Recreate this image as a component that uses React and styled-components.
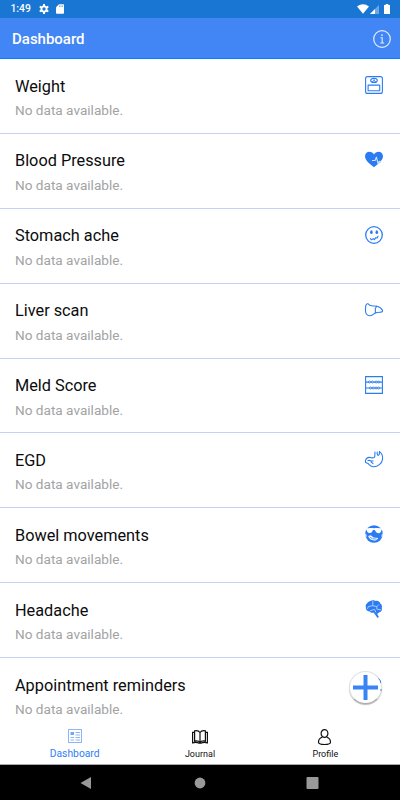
import React from "react";
import styled, { createGlobalStyle } from "styled-components";

const BLUE = "#2b7cf3";

const GlobalStyle = createGlobalStyle`
  * { box-sizing: border-box; }
  html, body { margin: 0; padding: 0; overflow: hidden; background: #fff; }
`;

const Screen = styled.div`
  position: relative;
  display: flex;
  flex-direction: column;
  width: 400px;
  height: 800px;
  overflow: hidden;
  background: #fff;
  font-family: Roboto, "Liberation Sans", sans-serif;
`;

const StatusBar = styled.div`
  flex: none;
  display: flex;
  align-items: center;
  height: 18px;
  padding: 0 10px 0 10.5px;
  background: #1976d2;
  color: #fff;
`;

const Clock = styled.span`
  width: 28px;
  font-size: 10.3px;
  font-weight: 500;
  line-height: 18px;
`;

const StatusIcon = styled.svg`
  flex: none;
  display: block;
  width: ${(p) => p.$w}px;
  height: ${(p) => p.$h}px;
  margin-left: ${(p) => p.$gap || 0}px;
`;

const Spacer = styled.div`
  flex: 1;
`;

const Header = styled.header`
  flex: none;
  display: flex;
  align-items: center;
  justify-content: space-between;
  height: 41px;
  padding: 1px 9px 0 12px;
  background: #4285f4;
  border-bottom: 1px solid #0a7cff;
`;

const HeaderTitle = styled.h1`
  margin: 0;
  color: #fff;
  font-size: 15px;
  font-weight: 500;
  line-height: 20px;
`;

const HeaderIcon = styled.svg`
  display: block;
  width: 18px;
  height: 18px;
`;

const List = styled.main`
  flex: none;
  height: 663px;
  overflow: hidden;
`;

const Row = styled.section`
  display: flex;
  justify-content: space-between;
  height: 74.9px;
  padding: 16.5px 17px 0 15px;
  border-bottom: 1px solid #c5d2f7;
`;

const RowTitle = styled.h2`
  margin: 0;
  color: #0c0c0c;
  font-size: 16.3px;
  font-weight: 400;
  line-height: 21px;
`;

const RowText = styled.p`
  margin: 3.5px 0 0;
  color: #a3a3a3;
  font-size: 13.6px;
  line-height: 20px;
`;

const RowIcon = styled.svg`
  flex: none;
  display: block;
  width: 18px;
  height: 18px;
  margin-top: 0.5px;
  overflow: visible;
  fill: none;
  stroke: ${BLUE};
  stroke-width: 1.1;
  stroke-linecap: round;
  stroke-linejoin: round;
`;

const AddButton = styled.button`
  position: absolute;
  left: 349px;
  top: 671px;
  display: flex;
  align-items: center;
  justify-content: center;
  width: 33px;
  height: 33px;
  padding: 0;
  border: 1px solid #e2e2e2;
  border-bottom-color: #aaa;
  border-radius: 50%;
  background: #fff;
  box-shadow: 0 1px 1px #bbb;
`;

const TabBar = styled.nav`
  flex: none;
  display: flex;
  height: 43px;
  padding: 0 12px;
  background: #fff;
  border-bottom: 1px solid #aaa;
`;

const Tab = styled.a`
  flex: 1;
  display: flex;
  flex-direction: column;
  align-items: center;
  padding-top: ${(p) => (p.$active ? 6 : 7)}px;
  color: ${(p) => (p.$active ? "#2f80f6" : "#111")};
`;

const TabIcon = styled.svg`
  display: block;
  width: 16px;
  height: 16px;
  overflow: visible;
  fill: none;
  stroke: currentColor;
`;

const TabLabel = styled.span`
  margin-top: ${(p) => (p.$active ? 3 : 2.5)}px;
  font-size: ${(p) => (p.$active ? 10.3 : 9)}px;
  line-height: 13px;
`;

const SystemBar = styled.div`
  flex: none;
  display: flex;
  align-items: center;
  justify-content: space-around;
  height: 35px;
  padding: 0 30px;
  background: #000;
`;

const SystemIcon = styled.svg`
  display: block;
  width: 14px;
  height: 14px;
  fill: #999;
`;

const icons = {
  scale: (
    <>
      <rect x=".6" y=".6" width="16.8" height="16.8" rx="2" />
      <ellipse cx="9" cy="4.4" rx="3.3" ry="2" />
      <path d="M9 5V3.5M7.4 5.5L9 4.5l1.6 1" strokeWidth=".8" />
      <rect x="3.1" y="9.1" width="11.6" height="5.7" />
    </>
  ),
  heart: (
    <>
      <path fill={BLUE} stroke="none" d="M9 16.2C5 13.2 0 9.4 0 5.2 0 2.6 2 .7 4.4.7 6.4.7 8 1.8 9 3.4 10 1.800 11.6.7 13.6.7 16 .7 18 2.6 18 5.2c0 4.2-5 8-9 11z" />
      <path stroke="#d3e4ff" d="M7.4 9.5h2.700l1.300-3.300 1.700 6.500 1.200-2.500 1.200 1 1-1.500" />
    </>
  ),
  face: (
    <>
      <circle cx="9" cy="9" r="8.300" strokeWidth="1.300" />
      <ellipse cx="6.400" cy="6.200" rx="1.300" ry="1.900" fill={BLUE} stroke="none" />
      <ellipse cx="11.800" cy="6.200" rx="1.300" ry="1.900" fill={BLUE} stroke="none" />
      <path d="M5.400 12.600l1.200 1.300 1.600-1.300 1.200 1 1.400-1.900 1.400.3.8-1.700" />
    </>
  ),
  liver: (
    <>
      <path d="M.9 4.200C1.600 2.400 3.200 2.300 4.300 4c2.400 1.400 5 .7 7.600 1.300 2.600.8 4.700 2.200 5.700 4.200.2 1.100-1 1.700-2.600 1.700-2.200 0-3.800.3-5.300 1.100-1.700 1.500-3.200 2.500-5.300 2.400C1.500 14.500.2 11.800.5 8.800.6 7 .5 5.400.9 4.200z" />
      <path d="M11.500 5.200l-1.200 2.500.1 4" />
    </>
  ),
  abacus: (
    <>
      <path strokeLinejoin="miter" d="M.6.6h16.800v16.800H.6zM1 6.100h16M1 12h16" />
      <path strokeWidth=".9" fill="#fff" d="M3.500 6a1 1 0 102 0 1 1 0 10-2 0M6.400 6a1 1 0 102 0 1 1 0 10-2 0M10.100 6a1 1 0 102 0 1 1 0 10-2 0M12.800 6a1 1 0 102 0 1 1 0 10-2 0M4.400 12a1 1 0 102 0 1 1 0 10-2 0M7.100 12a1 1 0 102 0 1 1 0 10-2 0M10 12a1 1 0 102 0 1 1 0 10-2 0M12.600 12a1 1 0 102 0 1 1 0 10-2 0" />
    </>
  ),
  stomach: (
    <>
      <path transform="translate(0 .6)" d="M14.500 1C17 3 18 6 17.500 9c-.7 4-4.500 7-9 7.200C5.500 16.300 4.500 14 3 12.800L.6 12C-.2 9.500 1.500 7 4 6.800c2.500-.2 3.500 1.200 5.200 0C10.500 5.800 9.500 3.500 10 1.500" />
      <path transform="translate(0 .6)" d="M12.200 1.500c-.3 2 .3 3.500 1.200 3.200 1.200-.5 1.200-2 1.100-3.700M3 10c2-1 3 1 5 .3M6 11.300l2 1.800" />
    </>
  ),
  bowel: (
    <>
      <circle cx="9" cy="9" r="8.800" fill={BLUE} stroke="none" />
      <path fill="#fff" stroke="none" d="M1.100 3.700C3 3.100 6.500 2.900 9 3.200c2.700-.3 6.100-.1 7.900.5L16 6.400c-.8 2.200-3.800 2.400-5.100.3L9.800 5.100H8.100L7 6.700C5.700 8.800 2.900 8.500 2 6.300z" />
      <path fill="#fff" stroke="none" d="M3.200 10.900l2.500-.6 2.800 2.200 4.700.5c-1.300 2.700-4.300 3.200-6.800 1.800-1.600-.9-2.700-2.300-3.200-3.900z" />
      <path stroke={BLUE} strokeWidth=".8" d="M5 12.100l2.500 1.700 3.700.2" />
      <path fill="#fff" stroke="none" d="M0 8.600l1.300.8.4 2.200-1 .3zM18 8.600l-1.200.8-.4 2.200.8.3z" />
    </>
  ),
  brain: (
    <>
      <path fill={BLUE} stroke="none" d="M2.400 3.100C3.200 1.300 5.300 1.200 6 .8c2-1 3.800-.4 4.700.1 2.500-.6 4.200 1.100 4.700 2.600 1.600 1.200 1.800 3 1.400 4.300.6 2.500-.5 4.200-2.300 4.500l-1.200.8-1.100 1 1.700 3-1.400.8-2.800-4-1.300-1.300c-1.600.3-3-.3-3.800-1.200C1.700 11.300.5 9.200.9 7.200.2 5.600 1.200 3.900 2.400 3.100z" />
      <path stroke="#b9d3fc" strokeWidth=".9" d="M7.800 1v4.700l-4.400.8-.8 2M7.800 5.700l4 .9 1.900-2M11.800 6.600l.1 2.600 3.700.6M5.200 10.800l4.300-1.500 1.300 2.800" />
    </>
  ),
};

const rows = [
  ["Weight", "scale"],
  ["Blood Pressure", "heart"],
  ["Stomach ache", "face"],
  ["Liver scan", "liver"],
  ["Meld Score", "abacus"],
  ["EGD", "stomach"],
  ["Bowel movements", "bowel"],
  ["Headache", "brain"],
  ["Appointment reminders", null],
];

function DataRow({ title, icon }) {
  return (
    <Row>
      <div>
        <RowTitle>{title}</RowTitle>
        <RowText>No data available.</RowText>
      </div>
      {icon && <RowIcon viewBox="0 0 18 18">{icons[icon]}</RowIcon>}
    </Row>
  );
}

export default function App() {
  return (
    <Screen>
      <GlobalStyle />
      <StatusBar>
        <Clock>1:49</Clock>
        <StatusIcon $w={10} $h={10} viewBox="0 0 10 10">
          <circle cx="5" cy="5" r="2.6" fill="none" stroke="#fff" strokeWidth="1.9" />
          <path d="M5 0v2M5 8v2M.7 2.5l1.7 1M7.6 6.5l1.7 1M.7 7.5l1.7-1M7.6 3.5l1.7-1" stroke="#fff" strokeWidth="2" />
        </StatusIcon>
        <StatusIcon $w={8} $h={10} $gap={7} viewBox="0 0 8 10">
          <path fill="#fff" d="M3 .2h4.2q.8 0 .8.8v8q0 .8-.8.8H.8Q0 9.800 0 9V3.200z" />
          <path d="M3.500 1.400v1.500M5 1.400v1.500M6.500 1.400v1.500" stroke="#1976d2" strokeWidth=".6" />
        </StatusIcon>
        <Spacer />
        <StatusIcon $w={12} $h={10} viewBox="0 0 12 10">
          <path fill="#fff" d="M0 2.500Q6-1.800 12 2.500L6 9.800z" />
        </StatusIcon>
        <StatusIcon $w={9} $h={9} $gap={1} viewBox="0 0 9 9">
          <path fill="#6da8e3" d="M9 0v9H0z" />
          <path fill="#fff" d="M5 4v5H0z" />
        </StatusIcon>
        <StatusIcon $w={6} $h={10} $gap={5} viewBox="0 0 6 10">
          <path fill="#fff" d="M1.700 0h2.600v1H6v9H0V1h1.700z" />
        </StatusIcon>
      </StatusBar>
      <Header>
        <HeaderTitle>Dashboard</HeaderTitle>
        <HeaderIcon viewBox="0 0 18 18" fill="none" stroke="#e3edff">
          <circle cx="9" cy="9" r="8.300" strokeWidth="1.200" />
          <path d="M7.500 7.700H9.200v5.200M7.300 13h3.800" strokeWidth="1.100" />
          <circle cx="9" cy="5.100" r=".9" fill="#e3edff" stroke="none" />
        </HeaderIcon>
      </Header>
      <List>
        {rows.map(([title, icon]) => (
          <DataRow key={title} title={title} icon={icon} />
        ))}
      </List>
      <TabBar>
        <Tab $active>
          <TabIcon viewBox="0 0 16 16">
            <rect x="1.500" y="1.500" width="13" height="13" stroke="#8db6fa" />
            <rect x="3.500" y="4" width="3.500" height="3" fill="#72a5f8" stroke="none" />
            <path d="M8.500 4.500h4.500M8.500 7h4.500M3.500 9.500h3.500M8.500 9.500h4.500M3.500 12h3.500M8.500 12h4.500" stroke="#8db6fa" />
          </TabIcon>
          <TabLabel $active>Dashboard</TabLabel>
        </Tab>
        <Tab>
          <TabIcon viewBox="0 0 16 16" strokeWidth="1.200">
            <path d="M8 3.500C6.700 1.700 4.500 1.400 2.600 1.900v10.300c2-.5 4.200-.2 5.400 1.400 1.200-1.600 3.400-1.900 5.400-1.400V1.900C11.500 1.400 9.300 1.700 8 3.500zM8 3.500v10M2.500 3.300H.6v10.500c2.400-.5 4.500-.6 6 .3h2.800c1.500-.9 3.600-.8 6-.3V3.300h-1.900" />
          </TabIcon>
          <TabLabel>Journal</TabLabel>
        </Tab>
        <Tab>
          <TabIcon viewBox="0.5 0 16 16" strokeWidth="1.200">
            <ellipse cx="8" cy="4.500" rx="3.400" ry="3.900" />
            <path d="M5.700 8.300C3.400 9 2 10.800 2 13.300 2 15 4.500 15.500 8 15.500s6-.5 6-2.200c0-2.500-1.400-4.300-3.700-5" />
          </TabIcon>
          <TabLabel>Profile</TabLabel>
        </Tab>
      </TabBar>
      <SystemBar>
        <SystemIcon viewBox="1.500 0 14 14"><path d="M2 7L12.500 1v12z" /></SystemIcon>
        <SystemIcon viewBox="0 0 14 14"><circle cx="7" cy="7" r="5.400" /></SystemIcon>
        <SystemIcon viewBox="0.500 0 14 14"><rect x="1" y="1" width="12" height="12" rx="1" /></SystemIcon>
      </SystemBar>
      <AddButton aria-label="Add">
        <svg width="33" height="27" viewBox="0 0 33 27" overflow="visible">
          <path d="M16.500 1v25M4 13.500h25" stroke="#3983f5" strokeWidth="4" />
          <path d="M29.500 4.500q2.500 2 2.200 4.500M31 16h2" stroke="#3983f5" fill="none" />
        </svg>
      </AddButton>
    </Screen>
  );
}
